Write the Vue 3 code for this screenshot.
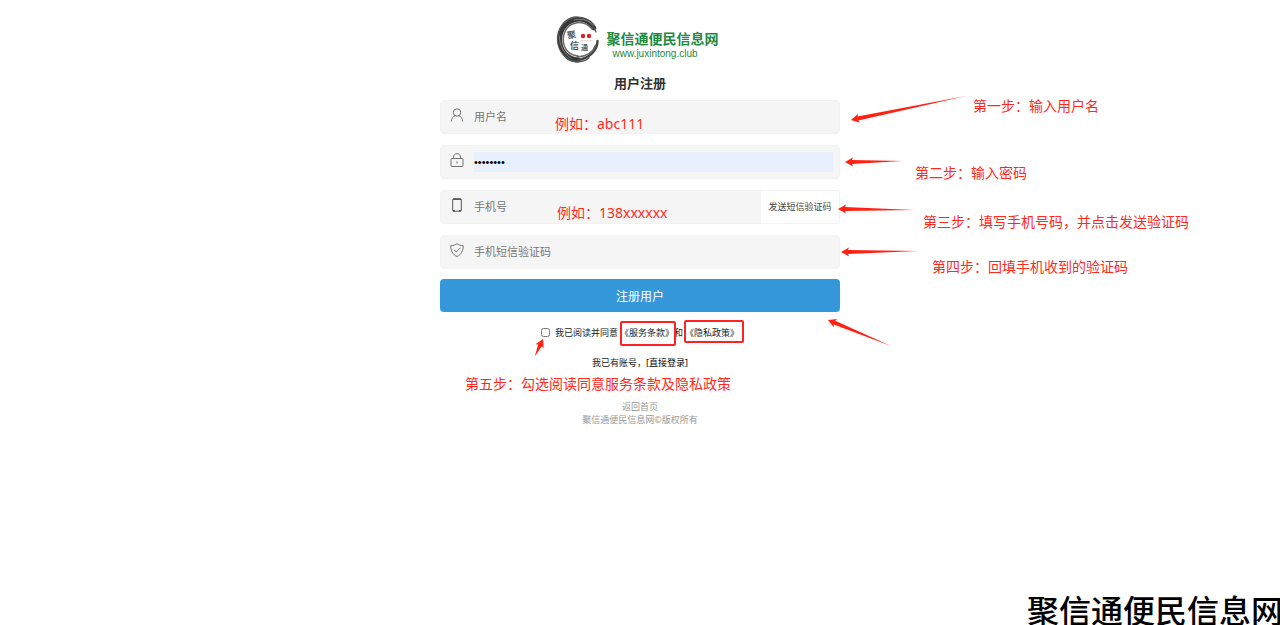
<template>
  <div class="page">
    <main class="register">
      <header class="brand">
        <svg class="seal" viewBox="0 0 44 48" aria-hidden="true">
          <g fill="none" stroke-linecap="round">
            <path d="M38 13 C33 5 25 3 18 5 C8 8 3 17 4 27 C5 37 12 44 22 44.500" stroke="#383838" stroke-width="4.600" />
            <path d="M40 17 C36 6 27 1.500 19 2 C8 4 1 14 1.500 25 C2 36 10 46.500 22 47" stroke="#555" stroke-width="1.300" />
            <path d="M36 14 C31 8 24 6.500 18 8.500 C10 11 6.500 19 7.500 27 C8.500 35 14 40.500 22 41" stroke="#666" stroke-width="1.400" />
            <path d="M38 10 C31 4 24 3.500 18 5" stroke="#aaa" stroke-width=".6" />
            <path d="M3.500 21 C3 30 8 39 15 43" stroke="#aaa" stroke-width=".6" />
            <path d="M41.500 26 C41.500 35 34 43 22 45" stroke="#444" stroke-width="2.400" />
            <path d="M39.500 30 C37 37 31 41.500 21 42" stroke="#666" stroke-width="1.300" />
            <path d="M10 43 C16 48 27 48 33 43" stroke="#555" stroke-width="1.300" />
          </g>
          <g class="seal-text">
            <text x="11" y="23" transform="rotate(-12 16 20)">聚</text>
            <text x="14" y="34">信</text>
            <text x="25" y="35" class="small">通</text>
          </g>
          <circle cx="27" cy="21" r="2.200" fill="#d8232a" />
          <circle cx="33" cy="21" r="2.200" fill="#d8232a" />
          <path d="M24 25.500 H36" stroke="#ddb5b5" stroke-width=".5" />
        </svg>
        <div class="brand-text">
          <strong>聚信通便民信息网</strong>
          <span>www.juxintong.club</span>
        </div>
      </header>

      <h1>用户注册</h1>

      <form @submit.prevent>
        <div class="field">
          <label for="username" aria-label="用户名">
            <svg viewBox="0 0 14 14">
              <circle cx="7" cy="4.500" r="3.700" />
              <path d="M1.300 13.500 C1.500 10.300 3 8.300 5.300 7.800 M12.700 13.500 C12.500 10.300 11 8.300 8.700 7.800" />
            </svg>
          </label>
          <input id="username" v-model="form.username" type="text" placeholder="用户名" />
        </div>

        <div class="field">
          <label for="password" aria-label="密码">
            <svg viewBox="0 0 14 14">
              <rect x="1" y="5.500" width="12" height="8" rx="1" />
              <path d="M3.500 5.500 V4.200 C3.500 -.5 10.500 -.5 10.500 4.200 V5.500 M7 8.300 V10.500" />
            </svg>
          </label>
          <input id="password" v-model="form.password" class="filled" type="password" />
        </div>

        <div class="field has-button">
          <label for="phone" aria-label="手机号">
            <svg viewBox="0 0 14 14" class="phone">
              <rect x="2.700" y=".8" width="8.600" height="12.400" rx="1" />
              <path d="M3 1.300 H11 M3 12.700 H5 M9 12.700 H11" stroke-width="1.500" />
            </svg>
          </label>
          <input id="phone" v-model="form.phone" type="text" placeholder="手机号" />
          <button type="button" class="send">发送短信验证码</button>
        </div>

        <div class="field">
          <label for="code" aria-label="手机短信验证码">
            <svg viewBox="0 0 14 14">
              <path d="M7 .7 C5.300 2 3.200 2.600 .8 2.600 C.8 7.500 2.600 11.500 7 13.500 C11.400 11.500 13.200 7.500 13.200 2.600 C10.800 2.600 8.700 2 7 .7 Z" />
              <path d="M4 6.800 L6.300 9 L10.300 4.800" />
            </svg>
          </label>
          <input id="code" v-model="form.code" type="text" placeholder="手机短信验证码" />
        </div>

        <button type="submit" class="submit">注册用户</button>

        <div class="agree">
          <input id="agree" v-model="form.agree" type="checkbox" />
          <label for="agree">我已阅读并同意</label>
          <a href="#">《服务条款》</a>和<a href="#">《隐私政策》</a>
        </div>
      </form>

      <p class="login">我已有账号，<a href="#">[直接登录]</a></p>

      <footer>
        <a href="#">返回首页</a>
        <span>聚信通便民信息网©版权所有</span>
      </footer>

      <!-- guide notes drawn over the form -->
      <div class="guide">
        <svg width="400" height="440" viewBox="0 0 400 440" aria-hidden="true">
          <polygon v-for="(a, i) in arrows" :key="i" :points="arrowPoints(a)" />
          <rect x="181" y="322" width="54" height="23" rx="1" />
          <rect x="245" y="321" width="58" height="21" rx="1" />
        </svg>
        <span
          v-for="note in notes"
          :key="note.text"
          class="note"
          :style="{ left: note.x + 'px', top: note.y + 'px' }"
        >{{ note.text }}</span>
      </div>
    </main>

    <div class="watermark">聚信通便民信息网</div>
  </div>
</template>

<script setup>
import { reactive } from 'vue';

const form = reactive({
  username: '',
  password: '12345678',
  phone: '',
  code: '',
  agree: false,
});

// Positions are relative to the form column
const notes = [
  { text: '例如：abc111', x: 115, y: 114 },
  { text: '例如：138xxxxxx', x: 117, y: 203 },
  { text: '第一步：输入用户名', x: 533, y: 96 },
  { text: '第二步：输入密码', x: 475, y: 163 },
  { text: '第三步：填写手机号码，并点击发送验证码', x: 483, y: 212 },
  { text: '第四步：回填手机收到的验证码', x: 492, y: 257 },
  { text: '第五步：勾选阅读同意服务条款及隐私政策', x: 25, y: 374 },
];

// tip -> tail
const arrows = [
  { tip: [411, 120], tail: [526, 96] },
  { tip: [405, 162], tail: [462, 161] },
  { tip: [398, 209], tail: [474, 210] },
  { tip: [401, 252], tail: [478, 251] },
  { tip: [388, 320], tail: [451, 346] },
  { tip: [103, 339], tail: [95, 356] },
];

function arrowPoints({ tip, tail }) {
  const dx = tail[0] - tip[0];
  const dy = tail[1] - tip[1];
  const len = Math.hypot(dx, dy);
  const at = (along, side) => {
    const x = tip[0] + (dx * along - dy * side) / len;
    const y = tip[1] + (dy * along + dx * side) / len;
    return `${x.toFixed(1)},${y.toFixed(1)}`;
  };
  return [
    at(0, 0), at(8, 4.5), at(7, 2), at(len, 0.1),
    at(len, -0.1), at(7, -2), at(8, -4.5),
  ].join(' ');
}
</script>

<style>
body {
  margin: 0;
  background: #fff;
}
</style>

<style scoped>
.page {
  position: relative;
  min-height: 100vh;
  overflow: hidden;
  font-family: "Noto Sans", "Noto Sans CJK SC", sans-serif;
  font-size: 9px;
  color: #222;
}

.page * {
  box-sizing: border-box;
}

.register {
  position: relative;
  width: 400px;
  max-width: 100%;
  margin: 0 auto;
  padding-top: 15px;
}

.brand {
  display: flex;
  align-items: center;
  justify-content: center;
  gap: 7px;
  height: 48px;
  padding-right: 6px;
}

.seal {
  width: 44px;
  height: 48px;
}

.seal-text {
  font-family: "Noto Sans CJK SC", sans-serif;
  font-size: 9px;
  font-weight: 700;
  fill: #555;
}

.seal-text .small {
  font-size: 7px;
}

.brand-text {
  display: flex;
  flex-direction: column;
  padding-top: 12px;
  color: #23893f;
}

.brand-text strong {
  font-size: 14px;
  line-height: 18px;
}

.brand-text span {
  padding-left: 6px;
  font-family: "Liberation Sans", Arial, sans-serif;
  font-size: 10px;
  line-height: 12px;
}

h1 {
  margin: 10px 0 7px;
  font-size: 13px;
  line-height: 20px;
  font-weight: 700;
  text-align: center;
  color: #333;
}

form {
  display: flex;
  flex-direction: column;
}

.field {
  display: flex;
  align-items: center;
  height: 34px;
  margin-bottom: 11px;
  padding: 0 6px 0 9px;
  border: 1px solid #f2f2f2;
  border-radius: 4px;
  background: #f5f5f5;
}

.field label {
  display: flex;
  width: 24px;
  padding-bottom: 4px;
}

.field svg {
  width: 14px;
  height: 14px;
  fill: none;
  stroke: #707070;
  stroke-width: 1;
}

.field .phone {
  stroke: #555;
}

.field input {
  flex: 1;
  min-width: 0;
  height: 20px;
  padding: 0 0 1px;
  border: 0;
  outline: 0;
  background: transparent;
  font-family: inherit;
  font-size: 11px;
  color: #000;
}

.field input::placeholder {
  color: #777;
}

.field .filled {
  background: #e8f0fe;
  font-family: "Liberation Sans", Arial, sans-serif;
}

.has-button {
  padding-right: 0;
}

.send {
  width: 78px;
  height: 32px;
  padding: 0 0 2px;
  border: 0;
  border-radius: 0 4px 4px 0;
  background: #fff;
  font: inherit;
  color: #444;
}

.submit {
  height: 33px;
  margin-top: -1px;
  border: 0;
  border-radius: 4px;
  background: #3598db;
  font-family: inherit;
  font-size: 12px;
  color: #fff;
}

.agree {
  display: flex;
  align-items: center;
  justify-content: center;
  height: 20px;
  margin-top: 10px;
}

.agree input {
  width: 9px;
  height: 9px;
  margin: 0 5px 0 0;
}

.agree label {
  margin-right: 2px;
}

.agree a + a {
  margin-left: 2px;
}

a {
  color: inherit;
  text-decoration: none;
}

.login {
  margin: 11px 0 0;
  line-height: 20px;
  text-align: center;
}

.login a {
  color: #000;
}

footer {
  display: flex;
  flex-direction: column;
  align-items: center;
  margin-top: 27px;
  line-height: 13px;
  color: #999;
}

.guide {
  position: absolute;
  inset: 0;
  pointer-events: none;
  color: #ff2a1c;
}

.guide svg {
  display: block;
  overflow: visible;
}

.guide polygon {
  fill: #ff2213;
}

.guide rect {
  fill: none;
  stroke: #ff2222;
  stroke-width: 2;
}

.note {
  position: absolute;
  font-size: 14px;
  line-height: 20px;
  white-space: nowrap;
}

.watermark {
  position: absolute;
  right: -3px;
  bottom: 0;
  font-family: "Noto Sans CJK SC", sans-serif;
  font-size: 32px;
  line-height: 32px;
  font-weight: 500;
  white-space: nowrap;
  color: #000;
}
</style>
